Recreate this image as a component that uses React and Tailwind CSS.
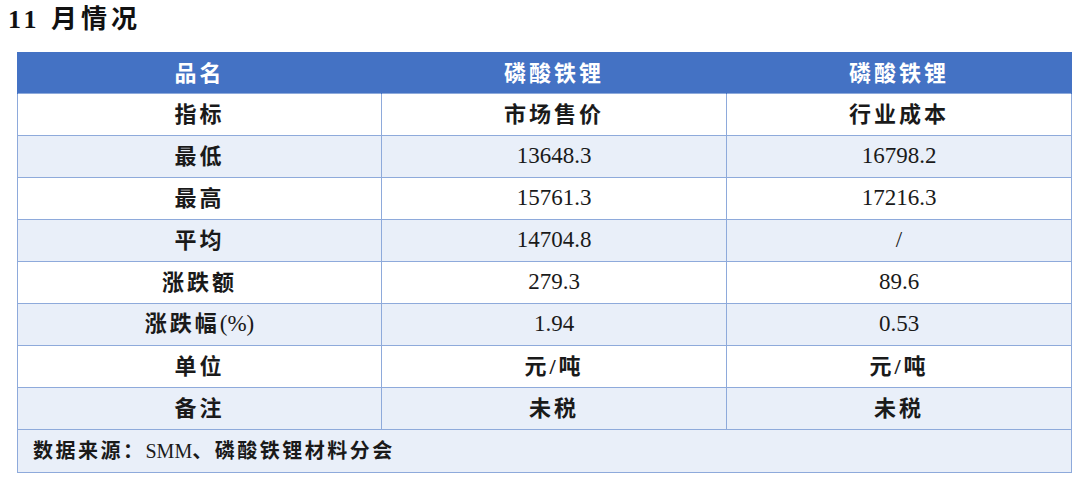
import React from "react";

const FONT = "font-['Liberation_Serif','Noto_Sans_CJK_SC',serif]";

const rows = [
  ["指标", "市场售价", "行业成本"],
  ["最低", "13648.3", "16798.2"],
  ["最高", "15761.3", "17216.3"],
  ["平均", "14704.8", "/"],
  ["涨跌额", "279.3", "89.6"],
  ["涨跌幅(%)", "1.94", "0.53"],
  ["单位", "元/吨", "元/吨"],
  ["备注", "未税", "未税"],
];

// CJK text gets extra spacing, plain numbers don't
const isCjk = (s) => /[\u4e00-\u9fff]/.test(s);

function Cell({ text }) {
  const pct = text.endsWith("(%)");
  return (
    <td
      className={`h-[42px] border border-[#8eaadb] text-center align-middle text-[#1a1a1a] ${
        isCjk(text) ? "text-[22px] font-semibold tracking-[3px]" : "text-[23px]"
      }`}
    >
      {pct ? (
        <>
          {text.slice(0, -3)}
          <span className="tracking-normal font-normal text-[23px]">(%)</span>
        </>
      ) : (
        text
      )}
    </td>
  );
}

export default function App() {
  return (
    <div className={`w-[1080px] h-[481px] bg-white ${FONT}`}>
      <h1 className="pl-[8px] pt-[3px] h-[52px] text-[26px] font-bold tracking-[4px] text-[#111] leading-[34px]">
        11 月情况
      </h1>

      <table className="ml-[17px] w-[1054px] border-collapse table-fixed">
        <colgroup>
          <col className="w-[364px]" />
          <col className="w-[345px]" />
          <col className="w-[345px]" />
        </colgroup>
        <thead>
          <tr className="bg-[#4472c4]">
            {["品名", "磷酸铁锂", "磷酸铁锂"].map((h, i) => (
              <th
                key={i}
                className="h-[41px] border-x border-t border-[#4472c4] text-center align-middle text-[22px] font-semibold tracking-[3px] text-white"
              >
                {h}
              </th>
            ))}
          </tr>
        </thead>
        <tbody>
          {rows.map((r, i) => (
            <tr key={i} className={i % 2 === 0 ? "bg-white" : "bg-[#e9eff9]"}>
              {r.map((c, j) => (
                <Cell key={j} text={c} />
              ))}
            </tr>
          ))}
          <tr className="bg-[#e9eff9]">
            <td
              colSpan={3}
              className="h-[43px] border border-[#8eaadb] pl-[15px] text-left align-middle text-[20px] font-semibold tracking-[2.5px] text-[#1a1a1a]"
            >
              数据来源：<span className="font-normal tracking-normal">SMM</span>、磷酸铁锂材料分会
            </td>
          </tr>
        </tbody>
      </table>
    </div>
  );
}
